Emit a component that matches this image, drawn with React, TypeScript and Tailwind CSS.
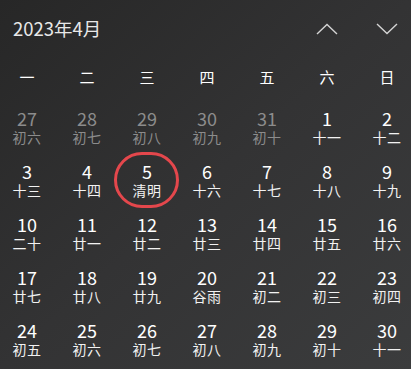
import React from 'react';

type Day = { n: number; lunar: string; muted?: boolean; today?: boolean };

const weekdays = ['一', '二', '三', '四', '五', '六', '日'];

const days: Day[] = [
  { n: 27, lunar: '初六', muted: true },
  { n: 28, lunar: '初七', muted: true },
  { n: 29, lunar: '初八', muted: true },
  { n: 30, lunar: '初九', muted: true },
  { n: 31, lunar: '初十', muted: true },
  { n: 1, lunar: '十一' },
  { n: 2, lunar: '十二' },
  { n: 3, lunar: '十三' },
  { n: 4, lunar: '十四' },
  { n: 5, lunar: '清明', today: true },
  { n: 6, lunar: '十六' },
  { n: 7, lunar: '十七' },
  { n: 8, lunar: '十八' },
  { n: 9, lunar: '十九' },
  { n: 10, lunar: '二十' },
  { n: 11, lunar: '廿一' },
  { n: 12, lunar: '廿二' },
  { n: 13, lunar: '廿三' },
  { n: 14, lunar: '廿四' },
  { n: 15, lunar: '廿五' },
  { n: 16, lunar: '廿六' },
  { n: 17, lunar: '廿七' },
  { n: 18, lunar: '廿八' },
  { n: 19, lunar: '廿九' },
  { n: 20, lunar: '谷雨' },
  { n: 21, lunar: '初二' },
  { n: 22, lunar: '初三' },
  { n: 23, lunar: '初四' },
  { n: 24, lunar: '初五' },
  { n: 25, lunar: '初六' },
  { n: 26, lunar: '初七' },
  { n: 27, lunar: '初八' },
  { n: 28, lunar: '初九' },
  { n: 29, lunar: '初十' },
  { n: 30, lunar: '十一' },
];

function Chevron({ up }: { up?: boolean }) {
  return (
    <svg width="22" height="12" viewBox="0 0 22 12" fill="none">
      <polyline
        points={up ? '1,11 11,1.5 21,11' : '1,1 11,10.5 21,1'}
        stroke="#d4d4d4"
        strokeWidth="1.4"
      />
    </svg>
  );
}

export default function App() {
  return (
    <div
      className="w-[411px] h-[369px] overflow-hidden bg-gradient-to-br from-[#272727] via-[#333334] to-[#3b3c3d] text-white"
      style={{ fontFamily: '"Noto Sans CJK SC", "Noto Sans", sans-serif' }}
    >
      {/* header */}
      <div className="flex items-center h-[58px]">
        <div className="pl-[13px] flex-1 text-[18.5px] text-[#e8e8e8]">2023年4月</div>
        <div className="flex -mr-[6px]">
          <div className="w-[60px] flex justify-center"><Chevron up /></div>
          <div className="w-[60px] flex justify-center"><Chevron /></div>
        </div>
      </div>

      <div className="-ml-[3px] grid grid-cols-[repeat(7,60px)]">
        {weekdays.map((w) => (
          <div key={w} className="h-[38px] flex items-center justify-center text-[15px] text-white">
            {w}
          </div>
        ))}

        {days.map((d, i) => (
          <div key={i} className="relative h-[53px] flex flex-col items-center pt-[13px]">
            {d.today && (
              <div className="absolute top-[3px] left-[-3px] w-[65px] h-[56px] rounded-full border-[3px] border-[#e4474c]" />
            )}
            <span className={`text-[18px] leading-[19px] ${d.muted ? 'text-[#8c8c8c]' : 'text-white'}`}>{d.n}</span>
            <span className={`text-[14px] leading-[18px] tracking-[0.5px] ${d.muted ? 'text-[#8c8c8c]' : 'text-[#f2f2f2]'}`}>{d.lunar}</span>
          </div>
        ))}
      </div>
    </div>
  );
}
